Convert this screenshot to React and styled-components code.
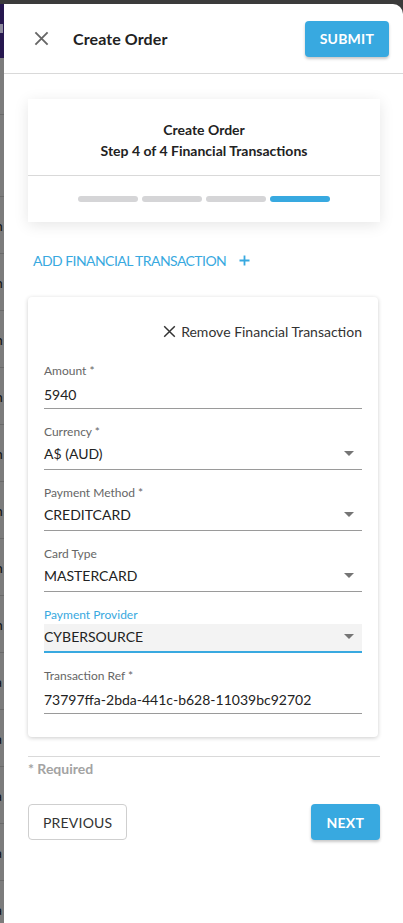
import React from "react";
import styled, { createGlobalStyle } from "styled-components";

const Global = createGlobalStyle`
  html, body { margin: 0; padding: 0; background: #3b3b3b; overflow: hidden; }
  body { font-family: Lato, "Open Sans", sans-serif; -webkit-font-smoothing: antialiased; }
  * { box-sizing: border-box; }
`;

const BLUE = "#38a9e0";

const Screen = styled.div`
  width: 403px;
  height: 923px;
  display: flex;
  flex-direction: column;
  background: #3b3b3b;
`;

const Main = styled.div`
  flex: 1;
  display: flex;
  margin-top: 4px;
  min-height: 0;
`;

const Backdrop = styled.div`
  width: 4px;
  flex: none;
  overflow: hidden;
  background: #7c7c7c;
  display: flex;
  flex-direction: column;
`;

const BackdropHeader = styled.div`
  height: 54px;
  background: #26174f;
  display: flex;
  align-items: center;
  flex: none;
`;

const BackdropIcon = styled.div`
  width: 3px;
  height: 9px;
  background: #8d8a9c;
  margin-top: -6px;
`;

const BackdropGap = styled.div`
  height: ${(p) => p.$h}px;
  flex: none;
  border-bottom: ${(p) => (p.$line ? "1px solid #6a6a6a" : "none")};
`;

const BackdropRow = styled.div`
  height: 57px;
  flex: none;
  border-bottom: 1px solid #6a6a6a;
  display: flex;
  align-items: center;
  font-size: 14px;
  color: #111;
  white-space: nowrap;
  margin-left: -5px;
`;

const Drawer = styled.div`
  flex: 1;
  background: #fff;
  border-top-right-radius: 10px;
  display: flex;
  flex-direction: column;
  min-width: 0;
`;

const Header = styled.header`
  height: 70px;
  flex: none;
  display: flex;
  align-items: center;
  padding: 0 14px 0 29px;
  border-bottom: 1px solid #d9d9d9;
`;

const IconButton = styled.button`
  border: none;
  background: none;
  padding: 0;
  width: 16px;
  height: 16px;
  display: flex;
  align-items: center;
  justify-content: center;
  cursor: pointer;
`;

const Title = styled.h1`
  margin: 0 0 0 24px;
  font-size: 16px;
  font-weight: 700;
  color: #222;
  flex: 1;
  letter-spacing: 0.1px;
`;

const Button = styled.button`
  font-family: Lato, sans-serif;
  font-size: 14px;
  text-transform: uppercase;
  height: 36px;
  padding: 0 ${(p) => p.$px || 16}px;
  border-radius: 4px;
  cursor: pointer;
  letter-spacing: 0.2px;
  ${(p) =>
    p.$primary
      ? `background: ${BLUE}; color: #fff; border: none; box-shadow: 0 2px 3px rgba(0,0,0,0.22); font-weight: 700;`
      : `background: #fff; color: #333; border: 1px solid #cfcfcf; font-weight: 400;`}
`;

const Body = styled.div`
  padding: 25px 23px 0 24px;
  display: flex;
  flex-direction: column;
`;

const StepCard = styled.section`
  background: #fff;
  box-shadow: 0 3px 14px rgba(0, 0, 0, 0.1);
  display: flex;
  flex-direction: column;
`;

const StepTitle = styled.div`
  padding: 20px 16px 14px;
  text-align: center;
  font-size: 14px;
  font-weight: 700;
  line-height: 21px;
  color: #222;
  border-bottom: 1px solid #d9d9d9;
`;

const Bars = styled.div`
  display: flex;
  justify-content: center;
  gap: 4px;
  padding: 20px 0 20px;
`;

const Bar = styled.div`
  width: 60px;
  height: 6px;
  border-radius: 3px;
  background: ${(p) => (p.$active ? BLUE : "#d5d5d7")};
`;

const AddLink = styled.button`
  align-self: flex-start;
  margin-top: 28px;
  border: none;
  background: none;
  padding: 0 5px;
  font-family: Lato, sans-serif;
  font-size: 14px;
  letter-spacing: -0.55px;
  color: ${BLUE};
  text-transform: uppercase;
  display: flex;
  align-items: center;
  gap: 13px;
  height: 20px;
  cursor: pointer;
`;

const TxCard = styled.section`
  margin: 27px 2px 0 0;
  background: #fff;
  border-radius: 4px;
  box-shadow: 0 1px 4px rgba(0, 0, 0, 0.2);
  padding: 24px 16px 7px;
  display: flex;
  flex-direction: column;
`;

const RemoveRow = styled.div`
  display: flex;
  justify-content: flex-end;
  align-items: center;
  gap: 5px;
  font-size: 14px;
  color: #333;
  height: 20px;
  margin-bottom: 23px;
`;

const Field = styled.div`
  display: flex;
  flex-direction: column;
  margin-bottom: 16px;
`;

const Label = styled.label`
  font-size: 12px;
  line-height: 14px;
  height: 14px;
  color: ${(p) => (p.$focused ? BLUE : "#666")};
  margin-bottom: 2px;
`;

const InputRow = styled.div`
  height: 29px;
  display: flex;
  align-items: center;
  justify-content: space-between;
  padding: ${(p) => (p.$focused ? "0 8px 2px 0" : p.$select ? "0 8px 3px 0" : "1px 8px 0 0")};
  font-size: 14px;
  color: #222;
  background: ${(p) => (p.$focused ? "#f3f3f3" : "transparent")};
  border-bottom: ${(p) => (p.$focused ? `2px solid ${BLUE}` : "1px solid #9a9a9a")};
`;

const Footer = styled.div`
  margin-top: 19px;
  border-top: 1px solid #d9d9d9;
  padding-top: 3px;
  font-size: 14px;
  font-weight: 700;
  color: #a3a3a3;
  line-height: 18px;
`;

const Actions = styled.div`
  display: flex;
  justify-content: space-between;
  margin-top: 26px;
`;

const CloseIcon = ({ size = 15, color = "#666", stroke = 2 }) => (
  <svg width={size} height={size} viewBox="0 0 16 16">
    <path d="M1.5 1.5 L14.5 14.5 M14.5 1.5 L1.5 14.5" stroke={color} strokeWidth={stroke} fill="none" />
  </svg>
);

const PlusIcon = () => (
  <svg width="11" height="11" viewBox="0 0 11 11">
    <path d="M5.5 0.5 V10.5 M0.5 5.5 H10.5" stroke={BLUE} strokeWidth="1.8" fill="none" />
  </svg>
);

const Caret = () => (
  <svg width="10" height="5" viewBox="0 0 10 5">
    <path d="M0 0 L10 0 L5 5 Z" fill="#757575" />
  </svg>
);

const fields = [
  { label: "Amount *", value: "5940" },
  { label: "Currency *", value: "A$ (AUD)", select: true },
  { label: "Payment Method *", value: "CREDITCARD", select: true },
  { label: "Card Type", value: "MASTERCARD", select: true },
  { label: "Payment Provider", value: "CYBERSOURCE", select: true, focused: true },
  { label: "Transaction Ref *", value: "73797ffa-2bda-441c-b628-11039bc92702" },
];

const bgRows = ["n", "n", "n", "n", "n", "n", "n", "n", "a", "a", "a", "a", "a"];

export default function App() {
  return (
    <>
      <Global />
      <Screen>
        <Main>
          <Backdrop aria-hidden="true">
            <BackdropHeader>
              <BackdropIcon />
            </BackdropHeader>
            <BackdropGap $h={57} $line />
            <BackdropGap $h={82} $line />
            {bgRows.map((t, i) => (
              <BackdropRow key={i}>{t}</BackdropRow>
            ))}
          </Backdrop>
          <Drawer>
            <Header>
              <IconButton aria-label="Close">
                <CloseIcon />
              </IconButton>
              <Title>Create Order</Title>
              <Button $primary $px={15}>Submit</Button>
            </Header>
            <Body>
              <StepCard>
                <StepTitle>
                  Create Order
                  <br />
                  Step 4 of 4 Financial Transactions
                </StepTitle>
                <Bars>
                  <Bar />
                  <Bar />
                  <Bar />
                  <Bar $active />
                </Bars>
              </StepCard>
              <AddLink>
                Add Financial Transaction
                <PlusIcon />
              </AddLink>
              <TxCard>
                <RemoveRow>
                  <CloseIcon size={13} color="#333" stroke={1.8} />
                  Remove Financial Transaction
                </RemoveRow>
                {fields.map((f) => (
                  <Field key={f.label}>
                    <Label $focused={f.focused}>{f.label}</Label>
                    <InputRow $focused={f.focused} $select={f.select}>
                      <span>{f.value}</span>
                      {f.select && <Caret />}
                    </InputRow>
                  </Field>
                ))}
              </TxCard>
              <Footer>* Required</Footer>
              <Actions>
                <Button $px={14}>Previous</Button>
                <Button $primary>Next</Button>
              </Actions>
            </Body>
          </Drawer>
        </Main>
      </Screen>
    </>
  );
}
